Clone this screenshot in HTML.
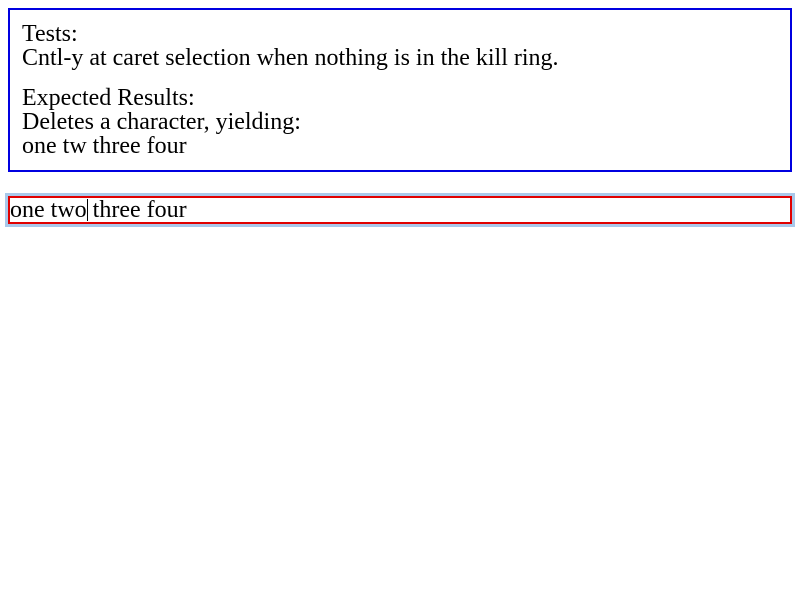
<!DOCTYPE html>
<html><head><style>
body{margin:8px;font-family:"Liberation Serif",serif;font-size:24px;line-height:24px;color:#000;background:#fff}
.exp{border:2px solid #0000e0;padding:12px;margin-bottom:24px}
.sc{margin-bottom:16px}
.test{border:2px solid #e00000;outline:3px solid #a9c8ea;outline-offset:0;height:24px;line-height:24px;padding-left:0;position:relative;white-space:pre}
.caret{position:absolute;left:77px;top:1px;width:1px;height:22px;background:#000}
</style></head><body>
<div class="exp"><div class="sc">Tests:<br>Cntl-y at caret selection when nothing is in the kill ring.</div><div>Expected Results:<br>Deletes a character, yielding:<br>one tw three four</div></div>
<div class="test">one two three four<span class="caret"></span></div>
</body></html>
